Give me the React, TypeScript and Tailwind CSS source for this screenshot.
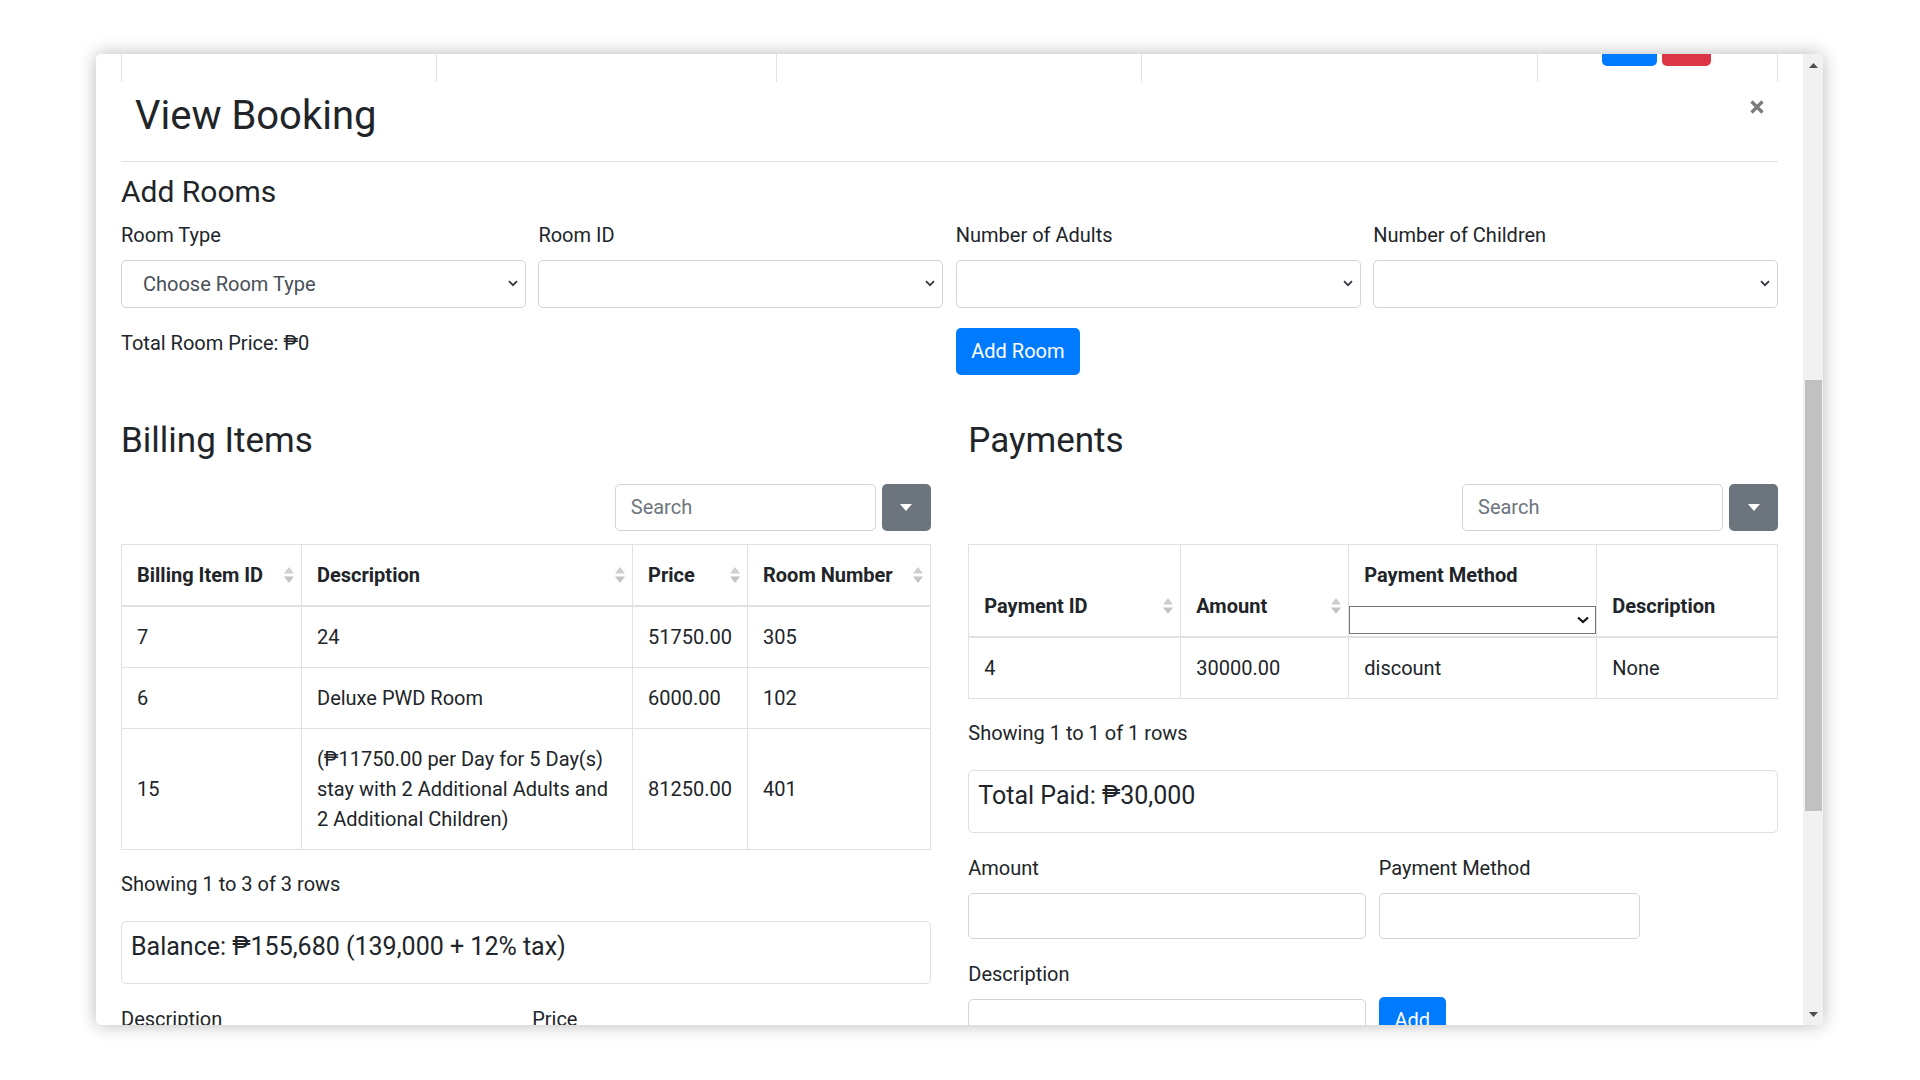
import React from "react";

const line = "border-[#dee2e6]";

function Chevron() {
  return (
    <svg width="10" height="7" viewBox="0 0 10 7">
      <path d="M1 1.2l4 4 4-4" fill="none" stroke="#343a40" strokeWidth="1.8" />
    </svg>
  );
}

function SortIcon() {
  return (
    <svg width="10" height="16" viewBox="0 0 10 16">
      <path d="M5 0L10 6.5H0z" fill="#cfcfcf" />
      <path d="M5 16L0 9.5h10z" fill="#c4c4c4" />
    </svg>
  );
}

function Caret() {
  return (
    <svg width="12" height="7" viewBox="0 0 12 7">
      <path d="M0 0h12L6 7z" fill="#fff" />
    </svg>
  );
}

function SelectBox({ text = "" }: { text?: string }) {
  return (
    <div className="flex h-[47.5px] items-center justify-between rounded-[5px] border border-[#ced4da] bg-white pl-[21px] pr-[7px] text-[#495057]">
      <span>{text}</span>
      <Chevron />
    </div>
  );
}

function Toolbar() {
  return (
    <div className="mt-[22px] flex h-[47.5px] justify-end gap-[6px]">
      <div className="flex w-[261px] items-center rounded-[5px] border border-[#ced4da] pl-[15px] text-[#6c757d]">
        Search
      </div>
      <div className="flex w-[49px] items-center justify-center rounded-[5px] bg-[#6c757d]">
        <Caret />
      </div>
    </div>
  );
}

function Th({ label, sort = true }: { label: string; sort?: boolean }) {
  return (
    <th className={`border border-b-2 ${line} p-0 text-left align-bottom font-bold`}>
      <div className="flex items-center justify-between py-[15px] pl-[15px] pr-[7px] leading-[30px]">
        <span>{label}</span>
        {sort && <SortIcon />}
      </div>
    </th>
  );
}

function Td({ children }: { children: React.ReactNode }) {
  return (
    <td className={`border ${line} px-[15px] py-[15px] align-middle leading-[30px]`}>{children}</td>
  );
}

function SummaryBox({ children }: { children: React.ReactNode }) {
  return (
    <div className="mt-[22px] rounded-[5px] border border-[#dfdfdf] pb-[21px] pl-[9px] pt-[10px] text-[25px] leading-[30px]">
      {children}
    </div>
  );
}

const billing = [
  { id: "7", desc: <>24</>, price: "51750.00", room: "305" },
  { id: "6", desc: <>Deluxe PWD Room</>, price: "6000.00", room: "102" },
  {
    id: "15",
    desc: (
      <>
        (₱11750.00 per Day for 5 Day(s)
        <br />
        stay with 2 Additional Adults and
        <br />2 Additional Children)
      </>
    ),
    price: "81250.00",
    room: "401",
  },
];

export default function App() {
  return (
    <div className="min-h-screen bg-white pl-[96px] pt-[54px] font-['Roboto',sans-serif] text-[20px] text-[#212529]">
      <div className="flex h-[971px] w-[1727px] overflow-hidden rounded-[5px] bg-white shadow-[0_0_18px_rgba(0,0,0,0.28)]">
        <div className="flex-1 px-[25px]">
          {/* page behind, scrolled up */}
          <div className="flex h-[28px]">
            <div className={`w-[315px] border-l ${line}`} />
            <div className={`w-[340px] border-l ${line}`} />
            <div className={`w-[365px] border-l ${line}`} />
            <div className={`w-[396px] border-l ${line}`} />
            <div className={`flex w-[241px] gap-[5px] border-x ${line} pl-[64px]`}>
              <div className="h-[12px] w-[55px] rounded-b-[5px] bg-[#007bff]" />
              <div className="h-[12px] w-[49px] rounded-b-[5px] bg-[#dc3545]" />
            </div>
          </div>

          <div className={`flex items-start justify-between border-b ${line} pb-[21px] pt-[10px]`}>
            <h1 className="pl-[14px] text-[40px] font-normal leading-[48px]">View Booking</h1>
            <svg className="mr-[14px] mt-[8px]" width="14" height="14" viewBox="0 0 14 14">
              <path d="M1.5 1.5l11 11M12.5 1.5l-11 11" stroke="#7a7a7a" strokeWidth="3.2" />
            </svg>
          </div>

          <h4 className="mb-[10px] mt-[12px] text-[30px] leading-[36px]">Add Rooms</h4>
          <div className="grid grid-cols-4 gap-x-[12.5px]">
            {[
              ["Room Type", "Choose Room Type"],
              ["Room ID", ""],
              ["Number of Adults", ""],
              ["Number of Children", ""],
            ].map(([label, value]) => (
              <div key={label}>
                <div className="mb-[10px] leading-[30px]">{label}</div>
                <SelectBox text={value} />
              </div>
            ))}
          </div>
          <div className="mt-[20px] grid grid-cols-4 gap-x-[12.5px]">
            <div className="leading-[30px]">Total Room Price: ₱0</div>
            <div />
            <div>
              <button className="h-[47.5px] rounded-[5px] bg-[#007bff] px-[15.5px] text-white">Add Room</button>
            </div>
          </div>

          <div className="mt-[44.5px] grid grid-cols-2 gap-x-[37.5px]">
            <div>
              <h3 className="text-[35px] leading-[42px]">Billing Items</h3>
              <Toolbar />
              <table className="mt-[12.5px] w-full table-fixed border-collapse">
                <colgroup>
                  <col className="w-[180px]" />
                  <col className="w-[331px]" />
                  <col className="w-[115px]" />
                  <col />
                </colgroup>
                <thead>
                  <tr>
                    <Th label="Billing Item ID" />
                    <Th label="Description" />
                    <Th label="Price" />
                    <Th label="Room Number" />
                  </tr>
                </thead>
                <tbody>
                  {billing.map((b) => (
                    <tr key={b.id}>
                      <Td>{b.id}</Td>
                      <Td>{b.desc}</Td>
                      <Td>{b.price}</Td>
                      <Td>{b.room}</Td>
                    </tr>
                  ))}
                </tbody>
              </table>
              <div className="mt-[19px] leading-[30px]">Showing 1 to 3 of 3 rows</div>
              <SummaryBox>Balance: ₱155,680 (139,000 + 12% tax)</SummaryBox>
              <div className="mt-[20px] grid grid-cols-2 gap-x-[12.5px] leading-[30px]">
                <div>Description</div>
                <div>Price</div>
              </div>
            </div>

            <div>
              <h3 className="text-[35px] leading-[42px]">Payments</h3>
              <Toolbar />
              <table className="mt-[12.5px] w-full table-fixed border-collapse">
                <colgroup>
                  <col className="w-[212px]" />
                  <col className="w-[168px]" />
                  <col className="w-[248px]" />
                  <col />
                </colgroup>
                <thead>
                  <tr>
                    <Th label="Payment ID" />
                    <Th label="Amount" />
                    <th className={`border border-b-2 ${line} p-0 text-left align-bottom font-bold`}>
                      <div className="px-[15px] py-[15px] leading-[30px]">Payment Method</div>
                      <div className="mb-[2px] mt-[1px] flex h-[28px] items-center justify-end border border-[#767676] bg-white pr-[6px]">
                        <svg width="12" height="8" viewBox="0 0 12 8">
                          <path d="M1 1.5l5 4.5 5-4.5" fill="none" stroke="#111" strokeWidth="2.2" />
                        </svg>
                      </div>
                    </th>
                    <Th label="Description" sort={false} />
                  </tr>
                </thead>
                <tbody>
                  <tr>
                    <Td>4</Td>
                    <Td>30000.00</Td>
                    <Td>discount</Td>
                    <Td>None</Td>
                  </tr>
                </tbody>
              </table>
              <div className="mt-[19px] leading-[30px]">Showing 1 to 1 of 1 rows</div>
              <SummaryBox>Total Paid: ₱30,000</SummaryBox>
              <div className="mt-[20px] flex gap-x-[12.5px]">
                <div className="w-[398px]">
                  <div className="mb-[10px] leading-[30px]">Amount</div>
                  <div className="h-[46px] rounded-[5px] border border-[#ced4da]" />
                </div>
                <div className="w-[261px]">
                  <div className="mb-[10px] leading-[30px]">Payment Method</div>
                  <div className="h-[46px] rounded-[5px] border border-[#ced4da]" />
                </div>
              </div>
              <div className="mt-[20px] flex gap-x-[12.5px]">
                <div className="w-[398px]">
                  <div className="mb-[10px] leading-[30px]">Description</div>
                  <div className="h-[46px] rounded-[5px] border border-[#ced4da]" />
                </div>
                <div>
                  <button className="mt-[38px] h-[47.5px] w-[67px] rounded-[5px] bg-[#007bff] text-white">Add</button>
                </div>
              </div>
            </div>
          </div>
        </div>

        {/* scrollbar */}
        <div className="flex w-[20px] flex-col bg-[#f1f1f1]">
          <div className="flex h-[22px] items-center justify-center">
            <svg width="9" height="5" viewBox="0 0 9 5">
              <path d="M4.5 0L9 5H0z" fill="#505050" />
            </svg>
          </div>
          <div className="h-[304px]" />
          <div className="ml-[2px] mr-[1px] h-[431px] bg-[#c1c1c1]" />
          <div className="flex-1" />
          <div className="flex h-[22px] items-center justify-center">
            <svg width="9" height="5" viewBox="0 0 9 5">
              <path d="M0 0h9L4.5 5z" fill="#505050" />
            </svg>
          </div>
        </div>
      </div>
    </div>
  );
}
